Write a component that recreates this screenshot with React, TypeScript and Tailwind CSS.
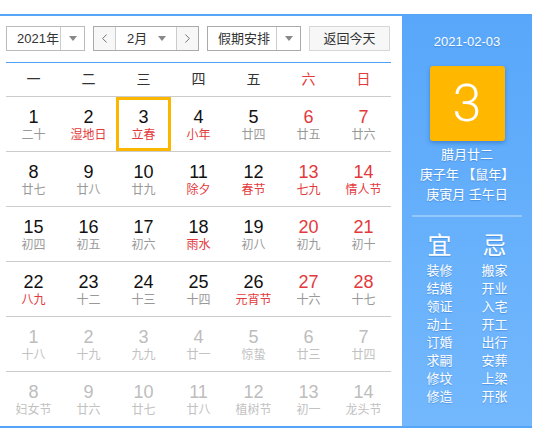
import React, { type FC } from "react";
import { ChevronLeft, ChevronRight } from "lucide-react";

type Tone = "normal" | "red" | "muted";

interface Day {
  num: number;
  lunar: string;
  numTone: Tone;
  lunarTone: Tone;
  other?: boolean;
  selected?: boolean;
}

const WEEKDAYS = ["一", "二", "三", "四", "五", "六", "日"];

// [num, lunar, numRed, lunarRed]
const rawRows: [number, string, boolean, boolean][][] = [
  [
    [1, "二十", false, false],
    [2, "湿地日", false, true],
    [3, "立春", false, true],
    [4, "小年", false, true],
    [5, "廿四", false, false],
    [6, "廿五", true, false],
    [7, "廿六", true, false],
  ],
  [
    [8, "廿七", false, false],
    [9, "廿八", false, false],
    [10, "廿九", false, false],
    [11, "除夕", false, true],
    [12, "春节", false, true],
    [13, "七九", true, true],
    [14, "情人节", true, true],
  ],
  [
    [15, "初四", false, false],
    [16, "初五", false, false],
    [17, "初六", false, false],
    [18, "雨水", false, true],
    [19, "初八", false, false],
    [20, "初九", true, false],
    [21, "初十", true, false],
  ],
  [
    [22, "八九", false, true],
    [23, "十二", false, false],
    [24, "十三", false, false],
    [25, "十四", false, false],
    [26, "元宵节", false, true],
    [27, "十六", true, false],
    [28, "十七", true, false],
  ],
  [
    [1, "十八", false, false],
    [2, "十九", false, false],
    [3, "九九", false, false],
    [4, "廿一", false, false],
    [5, "惊蛰", false, false],
    [6, "廿三", false, false],
    [7, "廿四", false, false],
  ],
  [
    [8, "妇女节", false, false],
    [9, "廿六", false, false],
    [10, "廿七", false, false],
    [11, "廿八", false, false],
    [12, "植树节", false, false],
    [13, "初一", false, false],
    [14, "龙头节", false, false],
  ],
];

const rows: Day[][] = rawRows.map((row, r) =>
  row.map(([num, lunar, numRed, lunarRed]) => {
    const other = r >= 4;
    return {
      num,
      lunar,
      other,
      selected: r === 0 && num === 3,
      numTone: other ? "muted" : numRed ? "red" : "normal",
      lunarTone: other ? "muted" : lunarRed ? "red" : "normal",
    };
  }),
);

const YI = ["装修", "结婚", "领证", "动土", "订婚", "求嗣", "修坟", "修造"];
const JI = ["搬家", "开业", "入宅", "开工", "出行", "安葬", "上梁", "开张"];

const numColor = (t: Tone) =>
  t === "red" ? "text-[#e4393c]" : t === "muted" ? "text-[#bdbdbd]" : "text-[#111]";
const lunarColor = (t: Tone) =>
  t === "red" ? "text-[#e4393c]" : t === "muted" ? "text-[#c2c2c2]" : "text-[#999]";

const Caret: FC = () => (
  <span className="w-0 h-0 border-x-[4px] border-x-transparent border-t-[5px] border-t-[#888]" />
);

const Toolbar: FC = () => (
  <div className="flex items-center gap-2 h-[25px] text-[13px] text-[#333]">
    <div className="flex h-full w-[79px] border border-[#bbb] bg-white">
      <div className="flex-1 flex items-center pl-[10px]">2021年</div>
      <div className="w-[24px] flex items-center justify-center border-l border-[#ccc]">
        <Caret />
      </div>
    </div>
    <div className="flex h-full w-[106px] border border-[#aaa] bg-white">
      <div className="w-[22px] flex items-center justify-center border-r border-[#ccc] bg-[#f7f7f7]">
        <ChevronLeft size={15} strokeWidth={1.3} color="#555" />
      </div>
      <div className="flex-1 flex items-center justify-between pl-[11px] pr-[10px]">
        <span>2月</span>
        <Caret />
      </div>
      <div className="w-[22px] flex items-center justify-center border-l border-[#ccc] bg-[#f7f7f7]">
        <ChevronRight size={15} strokeWidth={1.3} color="#555" />
      </div>
    </div>
    <div className="flex h-full w-[94px] border border-[#aaa] bg-white">
      <div className="flex-1 flex items-center pl-[10px]">假期安排</div>
      <div className="w-[24px] flex items-center justify-center border-l border-[#ccc]">
        <Caret />
      </div>
    </div>
    <div className="flex h-full w-[81px] items-center justify-center border border-[#d6d6d6] bg-[#f7f7f7]">
      返回今天
    </div>
  </div>
);

const Cell: FC<{ day: Day }> = ({ day }) => (
  <div
    className={
      day.selected
        ? "h-[54px] flex flex-col items-center pt-[7px] border-[3px] border-[#fbb700]"
        : "h-[54px] flex flex-col items-center pt-[10px]"
    }
  >
    <div className={`text-[18px] leading-[20px] ${numColor(day.numTone)}`}>{day.num}</div>
    <div className={`text-[12px] leading-[16px] ${lunarColor(day.lunarTone)}`}>{day.lunar}</div>
  </div>
);

const SidePanel: FC = () => (
  <div className="w-[130px] flex flex-col items-center text-white bg-gradient-to-b from-[#58a7fa] to-[#73b8fd] [text-shadow:0_1px_1px_rgba(30,90,170,0.35)]">
    <div className="mt-[17px] text-[13px] leading-[18px] font-medium">2021-02-03</div>
    <div className="mt-[15px] w-[75px] h-[75px] rounded-[3px] bg-[#ffb700] shadow-[0_2px_4px_rgba(0,60,140,0.35)] flex items-center justify-center [text-shadow:none]">
      <span className="text-[52px] leading-none font-light font-['Roboto',sans-serif]">3</span>
    </div>
    <div className="mt-[4px] text-[13px] leading-[20px] flex flex-col items-center">
      <div>腊月廿二</div>
      <div>庚子年 【鼠年】</div>
      <div>庚寅月 壬午日</div>
    </div>
    <div className="mt-[10px] w-[110px] h-[2px] bg-[#94c8fb]" />
    <div className="mt-[15px] flex">
      <div className="w-[55px] flex flex-col items-center">
        <div className="text-[24px] leading-[28px]">宜</div>
        <div className="mt-[2px] text-[13px] leading-[18px] flex flex-col items-center">
          {YI.map((t) => (
            <div key={t}>{t}</div>
          ))}
        </div>
      </div>
      <div className="w-[55px] flex flex-col items-center">
        <div className="text-[24px] leading-[28px]">忌</div>
        <div className="mt-[2px] text-[13px] leading-[18px] flex flex-col items-center">
          {JI.map((t) => (
            <div key={t}>{t}</div>
          ))}
        </div>
      </div>
    </div>
  </div>
);

const App: FC = () => {
  return (
    <div className="w-[537px] h-[438px] bg-white font-['Liberation_Sans','Noto_Sans_CJK_SC',sans-serif]">
      <div className="mt-[14px] inline-flex w-[532px] border-y-2 border-[#55a6f8]">
        <div className="w-[402px] pt-[10px] pl-[6px]">
          <Toolbar />
          <div className="mt-[11px] w-[385px] h-px bg-[#4ea3f5]" />
          <div className="w-[385px] grid grid-cols-7 h-[33px] items-center text-[14px]">
            {WEEKDAYS.map((w, i) => (
              <div key={w} className={i >= 5 ? "text-center text-[#e4393c]" : "text-center text-[#333]"}>
                {w}
              </div>
            ))}
          </div>
          <div className="w-[385px]">
            {rows.map((row, r) => (
              <div key={r} className="grid grid-cols-7 border-t border-[#cccccc]">
                {row.map((d, i) => (
                  <Cell key={i} day={d} />
                ))}
              </div>
            ))}
          </div>
        </div>
        <SidePanel />
      </div>
    </div>
  );
};

export default App;
